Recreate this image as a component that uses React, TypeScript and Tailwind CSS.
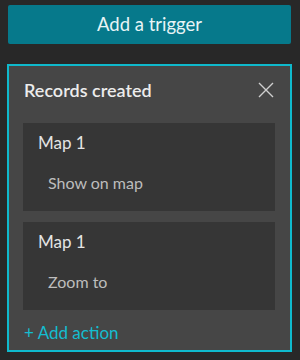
const actions = [
    { map: "Map 1", label: "Show on map" },
    { map: "Map 1", label: "Zoom to" },
];

function ActionCard({ map, label }: { map: string; label: string }) {
    return (
        <div className="h-[88px] w-[252px] bg-[#363636] pl-[15px] pt-[10px]">
            <div className="text-[17px] leading-[20px] text-[#e4e4e4]">{map}</div>
            <div className="mt-[20px] pl-[10px] text-[16px] leading-[20px] text-[#bdbdbd]">{label}</div>
        </div>
    );
}

export default function App() {
    return (
        <div className="w-[300px] h-[360px] bg-[#282828] pt-[5px] font-['Lato','Noto_Sans',sans-serif]">
            <button className="ml-[8px] flex h-[39px] w-[283px] items-center justify-center rounded-[2px] bg-[#06798b] text-[18.5px] text-[#e8f4f6]">
                Add a trigger
            </button>

            <div className="ml-[7px] mt-[20px] h-[288px] w-[285px] border-2 border-[#0fb9cc] bg-[#464646]">
                <div className="flex items-center justify-between pl-[15px] pr-[16px] pt-[14px]">
                    <span className="text-[18px] font-semibold leading-[20px] text-[#ececec]">Records created</span>
                    <svg width="16" height="16" viewBox="0 0 16 16" className="text-[#cfcfcf]">
                        <path d="M1 1L15 15M15 1L1 15" stroke="currentColor" strokeWidth="1.4" fill="none" />
                    </svg>
                </div>

                <div className="mt-[23px] flex flex-col gap-[11px] pl-[14px]">
                    {actions.map((a, i) => (
                        <ActionCard key={i} map={a.map} label={a.label} />
                    ))}
                </div>

                <div className="mt-[13px] pl-[15px] text-[17px] leading-[20px] text-[#14bdd0]">+ Add action</div>
            </div>
        </div>
    );
}
